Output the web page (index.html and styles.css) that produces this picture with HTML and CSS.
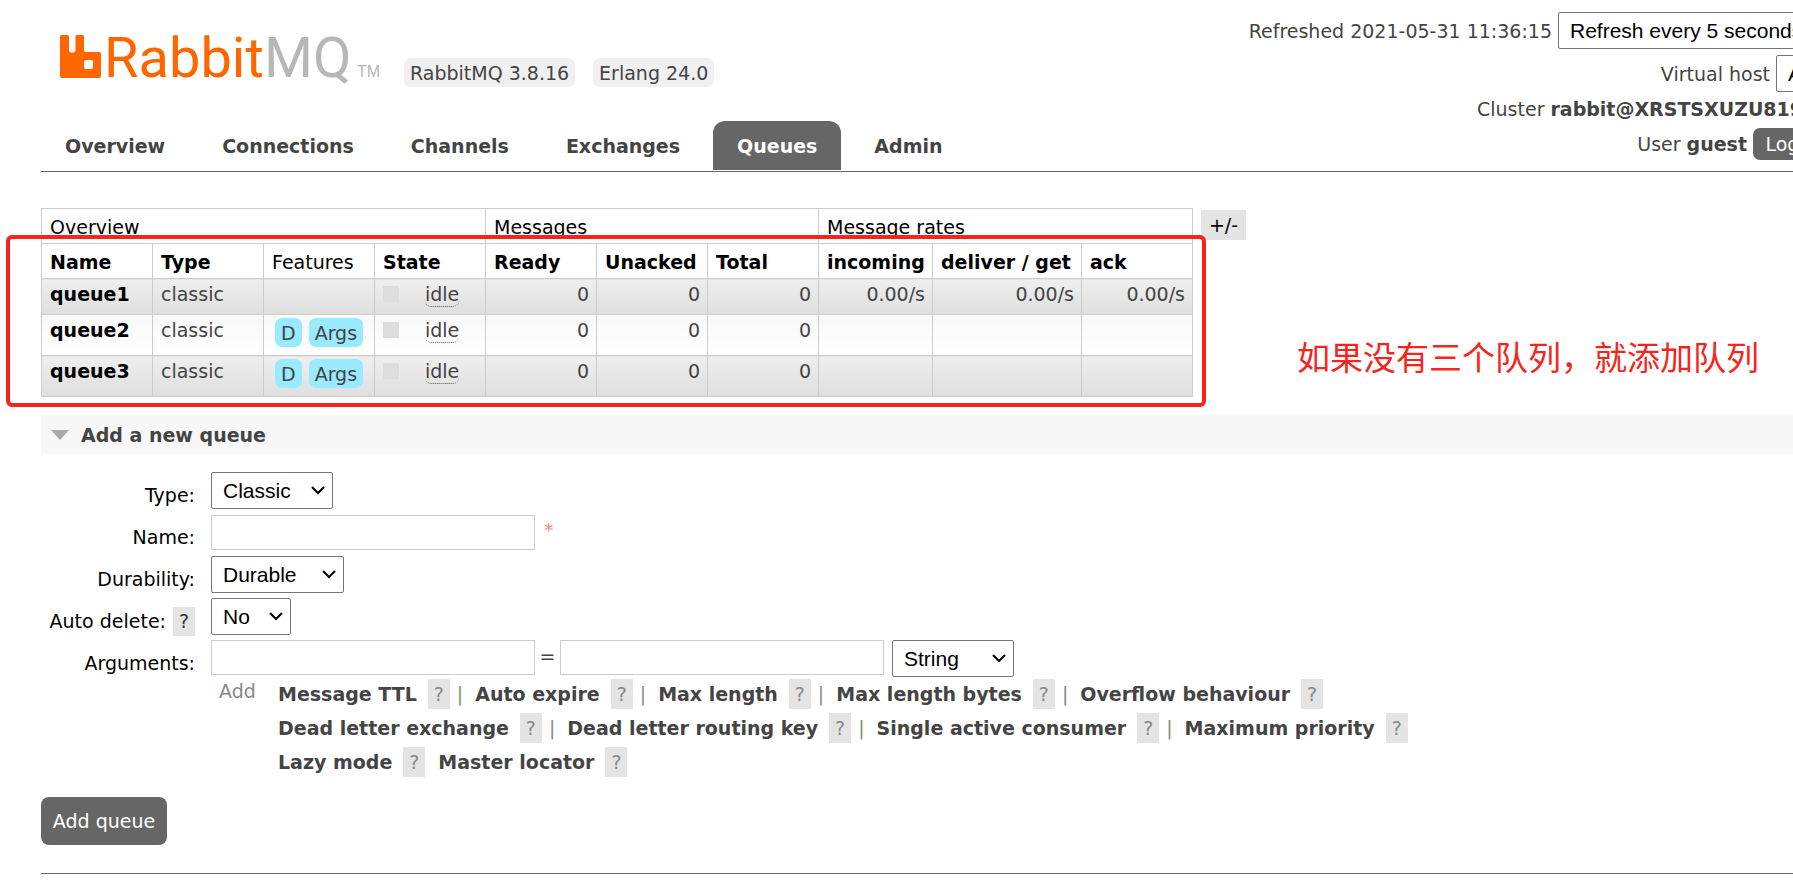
FILE: index.html
```html
<!DOCTYPE html>
<html lang="en">
<head>
<meta charset="utf-8">
<title>RabbitMQ Management</title>
<link rel="stylesheet" href="styles.css">
</head>
<body>
<header class="header">
  <div class="header-main">
    <div class="brand">
      <svg class="logo" viewBox="0 0 322 84" role="img" aria-label="RabbitMQ">
        <path class="logo-mark" fill-rule="evenodd" d="M1.500 35H7.500Q9 35 9 36.500V50.500Q9 52.500 11 52.500H13.500Q15.500 52.500 15.500 50.500V36.500Q15.500 35 17 35H22.500Q24 35 24 36.500V50Q24 52 26 52H39Q41 52 41 54V76Q41 78 39 78H2Q0 78 0 76V36.500Q0 35 1.500 35ZM26 60Q24 60 24 62V67Q24 69 26 69H31Q33 69 33 67V62Q33 60 31 60Z"/>
        <text class="logo-rabbit" x="44" y="77">Rabbit</text>
        <text class="logo-mq" x="204" y="77">MQ</text>
        <text class="logo-tm" x="297" y="77">TM</text>
      </svg>
      <ul class="versions">
        <li>RabbitMQ 3.8.16</li>
        <li>Erlang 24.0</li>
      </ul>
    </div>
    <nav class="tabs">
      <a href="#overview">Overview</a>
      <a href="#connections">Connections</a>
      <a href="#channels">Channels</a>
      <a href="#exchanges">Exchanges</a>
      <a href="#queues" class="selected">Queues</a>
      <a href="#admin">Admin</a>
    </nav>
  </div>
  <div class="status">
    <div class="status-row status-tall">
      <label for="refresh">Refreshed 2021-05-31 11:36:15</label>
      <span class="select select-refresh"><select id="refresh"><option>Refresh every 5 seconds</option></select><svg viewBox="0 0 14 9"><path d="M1 1l6 6 6-6"/></svg></span>
    </div>
    <div class="status-row status-tall">
      <label for="vhost">Virtual host</label>
      <span class="select select-vhost"><select id="vhost"><option>All</option></select><svg viewBox="0 0 14 9"><path d="M1 1l6 6 6-6"/></svg></span>
    </div>
    <div class="status-row status-cluster"><span>Cluster</span><b>rabbit@XRSTSXUZU819</b></div>
    <div class="status-row status-user"><span>User</span><b>guest</b><button class="logout" type="button">Log out</button></div>
  </div>
</header>

<main class="main">
  <div class="queues">
    <table class="list">
      <colgroup><col span="7" class="col"><col class="col-incoming"><col class="col-deliver"><col class="col"></colgroup>
      <thead>
        <tr><th class="plain" colspan="4">Overview</th><th class="plain" colspan="3">Messages</th><th class="plain" colspan="3">Message rates</th></tr>
        <tr><th>Name</th><th>Type</th><th class="plain">Features</th><th>State</th><th>Ready</th><th>Unacked</th><th>Total</th><th>incoming</th><th>deliver / get</th><th>ack</th></tr>
      </thead>
      <tbody>
        <tr class="alt"><td><a href="#queue1">queue1</a></td><td>classic</td><td></td><td><span class="state"><i></i><abbr>idle</abbr></span></td><td class="num">0</td><td class="num">0</td><td class="num">0</td><td class="num">0.00/s</td><td class="num">0.00/s</td><td class="num">0.00/s</td></tr>
        <tr class="tall"><td><a href="#queue2">queue2</a></td><td>classic</td><td class="features"><span class="tags"><span>D</span><span>Args</span></span></td><td><span class="state"><i></i><abbr>idle</abbr></span></td><td class="num">0</td><td class="num">0</td><td class="num">0</td><td></td><td></td><td></td></tr>
        <tr class="tall alt"><td><a href="#queue3">queue3</a></td><td>classic</td><td class="features"><span class="tags"><span>D</span><span>Args</span></span></td><td><span class="state"><i></i><abbr>idle</abbr></span></td><td class="num">0</td><td class="num">0</td><td class="num">0</td><td></td><td></td><td></td></tr>
      </tbody>
    </table>
    <button class="columns" type="button">+/-</button>
    <div class="mark-box"></div>
    <p class="mark-note" lang="zh-CN">如果没有三个队列，就添加队列</p>
  </div>

  <h2 class="section-title"><svg viewBox="0 0 18 10"><path d="M0 0H18L9 10Z"/></svg>Add a new queue</h2>

  <form class="form">
    <div class="field">
      <label for="type">Type:</label>
      <span class="select select-md"><select id="type"><option>Classic</option></select><svg viewBox="0 0 14 9"><path d="M1 1l6 6 6-6"/></svg></span>
    </div>
    <div class="field">
      <label for="name">Name:</label>
      <div class="controls"><input id="name" type="text"><span class="required">*</span></div>
    </div>
    <div class="field">
      <label for="durability">Durability:</label>
      <span class="select select-lg"><select id="durability"><option>Durable</option></select><svg viewBox="0 0 14 9"><path d="M1 1l6 6 6-6"/></svg></span>
    </div>
    <div class="field">
      <div class="label-help"><label for="autodelete">Auto delete:</label><button class="help dark" type="button">?</button></div>
      <span class="select select-sm"><select id="autodelete"><option>No</option></select><svg viewBox="0 0 14 9"><path d="M1 1l6 6 6-6"/></svg></span>
    </div>
    <div class="field">
      <label for="argkey">Arguments:</label>
      <div class="controls controls-args">
        <input id="argkey" type="text"><span class="equals">=</span><input type="text" aria-label="Argument value">
        <span class="select select-md select-type"><select aria-label="Argument type"><option>String</option></select><svg viewBox="0 0 14 9"><path d="M1 1l6 6 6-6"/></svg></span>
      </div>
    </div>
    <div class="presets">
      <span class="presets-add">Add</span>
      <div class="preset-rows">
        <div class="preset-row">
          <a href="#ttl">Message TTL</a><button class="help" type="button">?</button><span class="bar">|</span>
          <a href="#expire">Auto expire</a><button class="help" type="button">?</button><span class="bar">|</span>
          <a href="#maxlen">Max length</a><button class="help" type="button">?</button><span class="bar">|</span>
          <a href="#maxbytes">Max length bytes</a><button class="help" type="button">?</button><span class="bar">|</span>
          <a href="#overflow">Overflow behaviour</a><button class="help" type="button">?</button>
        </div>
        <div class="preset-row">
          <a href="#dlx">Dead letter exchange</a><button class="help" type="button">?</button><span class="bar">|</span>
          <a href="#dlrk">Dead letter routing key</a><button class="help" type="button">?</button><span class="bar">|</span>
          <a href="#sac">Single active consumer</a><button class="help" type="button">?</button><span class="bar">|</span>
          <a href="#priority">Maximum priority</a><button class="help" type="button">?</button>
        </div>
        <div class="preset-row">
          <a href="#lazy">Lazy mode</a><button class="help last" type="button">?</button>
          <a href="#locator">Master locator</a><button class="help" type="button">?</button>
        </div>
      </div>
    </div>
    <button class="submit" type="button">Add queue</button>
  </form>
</main>
<footer class="footer"></footer>
</body>
</html>
```

FILE: styles.css
```css
* { box-sizing: border-box; }

body {
  margin: 0;
  overflow: hidden;
  background: #fff;
  color: #444;
  font: 19px/24px Verdana, "DejaVu Sans", sans-serif;
}

a { color: #444; font-weight: bold; text-decoration: none; }
button { border: 0; font: inherit; }

/* Header: the status column runs past the right edge of the window */
.header {
  display: flex;
  justify-content: space-between;
  margin: 0 -56px 0 41px;
  padding-bottom: 1px;
  border-bottom: 1px solid #666;
}
.brand { display: flex; padding-left: 19px; }
.logo { width: 322px; height: 84px; overflow: visible; }
.logo-mark, .logo-rabbit { fill: #f60; }
.logo-rabbit, .logo-mq { font: 56px Roboto, sans-serif; }
.logo-mq, .logo-tm { fill: #b7b7b7; }
.logo-tm { font: 16px "Liberation Sans", Arial, sans-serif; }
.versions {
  display: flex;
  gap: 18px;
  margin: 58px 0 0 22px;
  padding: 0;
  list-style: none;
}
.versions li { height: 29px; padding: 3px 6px; border-radius: 7px; background: #f0f0f0; }

.tabs { display: flex; gap: 9px; margin-top: 34px; }
.tabs a { padding: 13px 24px 12px; border-radius: 12px 12px 0 0; }
.tabs .selected { background: #666; color: #fff; }

.status {
  display: flex;
  flex-direction: column;
  align-items: flex-end;
  padding-top: 9px;
  white-space: nowrap;
}
.status-row { display: flex; align-items: center; gap: 6px; }
.status-tall { height: 43px; }
.status-cluster { height: 28px; padding-right: 46px; }
.status-user { height: 42px; }
.logout { width: 96px; height: 32px; padding: 0; border-radius: 7px; background: #666; color: #fff; }

/* Form controls */
.select { display: inline-grid; grid-template-columns: 1fr 30px; height: 37px; color: #000; }
.select select {
  grid-area: 1 / 1 / 2 / 3;
  width: 100%;
  height: 100%;
  padding: 0 0 0 11px;
  appearance: none;
  border: 1px solid #767676;
  border-radius: 2px;
  background: #fff;
  color: #000;
  font: 21px "Liberation Sans", Arial, sans-serif;
}
.select svg {
  grid-area: 1 / 2;
  align-self: center;
  justify-self: center;
  width: 14px;
  height: 9px;
  fill: none;
  stroke: #000;
  stroke-width: 2;
  pointer-events: none;
}
.select-refresh { width: 291px; }
.select-vhost { width: 73px; }
.select-sm { width: 80px; }
.select-md { width: 122px; }
.select-lg { width: 133px; }
.select-type { margin-left: 8px; }

input {
  width: 324px;
  height: 35px;
  padding: 0 6px;
  border: 1px solid #ccc;
  background: #fff;
  font: 19px Verdana, "DejaVu Sans", sans-serif;
}

/* Queue list */
.main { padding-left: 41px; }
.queues { position: relative; display: flex; align-items: flex-start; gap: 8px; padding-top: 36px; }
.list { border-collapse: collapse; table-layout: fixed; width: 1151px; }
.col { width: 111px; }
.col-incoming { width: 114px; }
.col-deliver { width: 149px; }
.list th, .list td {
  height: 35px;
  padding: 3px 7px 0 8px;
  border: 1px solid #ccc;
  text-align: left;
  vertical-align: top;
  white-space: nowrap;
}
.list th { padding-top: 6px; padding-right: 0; color: #000; }
.list .plain { font-weight: normal; }
.list td { height: 36px; background: linear-gradient(#f8f8f8, #fff); }
.list .tall td { height: 41px; }
.list .alt td { background: linear-gradient(#efefef, #dedede); }
.list td a { color: #000; }
.list .num { text-align: right; }
.list .features { padding: 3px 0 0 11px; }
.tags { display: flex; gap: 7px; }
.tags span { height: 29px; padding: 3px 6px; border-radius: 7px; background: #98ebff; }
.state { display: flex; align-items: flex-start; gap: 26px; }
.state i { width: 16px; height: 16px; margin-top: 4px; background: #ddd; }
.state abbr { border-bottom: 1px dotted #555; border-radius: 6px; }
.columns { margin-top: 2px; width: 45px; height: 30px; padding: 0; background: #e4e4e4; color: #000; }

/* Annotations drawn over the list */
.mark-box {
  position: absolute;
  top: 63px;
  left: -35px;
  width: 1200px;
  height: 172px;
  border: 4px solid #f5241c;
  border-radius: 6px;
}
.mark-note {
  position: absolute;
  top: 160px;
  left: 1256px;
  margin: 0;
  color: #f5241c;
  font: 33px/48px "Noto Sans CJK SC", sans-serif;
  white-space: nowrap;
}

/* Add-queue section */
.section-title {
  display: flex;
  align-items: center;
  gap: 12px;
  height: 39px;
  margin: 18px 0;
  padding-left: 10px;
  background: #f7f7f7;
  font-size: 19px;
}
.section-title svg { width: 18px; height: 10px; fill: #aaa; }
.field { display: grid; grid-template-columns: 154px 1fr; column-gap: 16px; height: 42px; align-items: start; color: #000; }
.field > label, .label-help { padding-top: 11px; text-align: right; }
.label-help { display: flex; align-items: center; justify-content: flex-end; gap: 7px; height: 42px; padding-top: 4px; white-space: nowrap; }
.controls { display: flex; align-items: flex-start; padding-top: 1px; }
.controls-args { padding-top: 0; }
.required { padding: 3px 9px; color: #f88; }
.equals { width: 25px; padding-top: 4px; text-align: center; color: #444; }
.help { flex: none; width: 22px; height: 30px; padding: 0; background: #e4e4e4; color: #888; font-size: 19px; }
.help.dark { height: 29px; color: #333; }
.presets { display: flex; padding-left: 178px; color: #888; }
.presets-add { width: 59px; margin-top: -3px; }
.preset-row { display: flex; align-items: center; height: 34px; white-space: nowrap; }
.preset-rows { margin-top: -5px; }
.preset-row a { margin-right: 11px; }
.bar { margin: 0 12px 0 7px; }
.help.last { margin-right: 13px; }
.submit { width: 126px; height: 48px; margin-top: 18px; padding: 0; border-radius: 8px; background: #666; color: #fff; }
.footer { margin: 28px 0 0 41px; border-top: 1px solid #666; }
```
